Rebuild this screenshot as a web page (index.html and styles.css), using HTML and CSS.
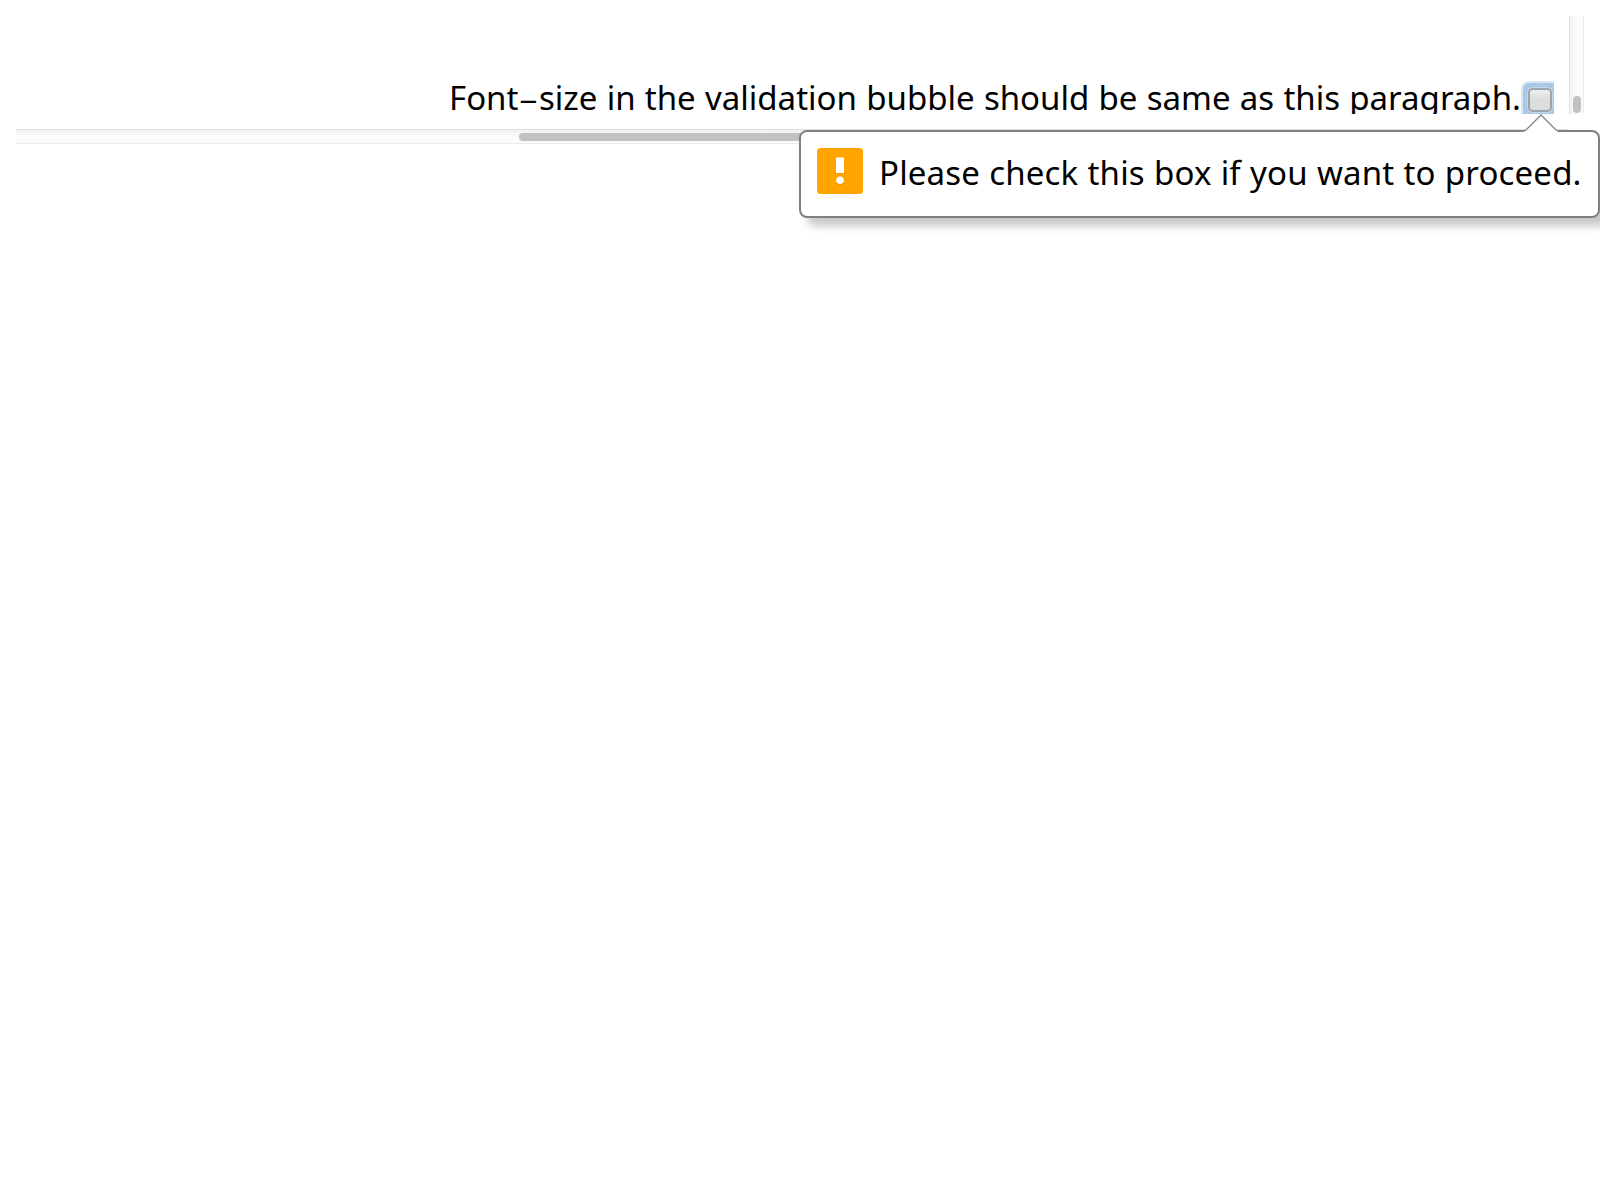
FILE: index.html
```html
<!DOCTYPE html>
<html lang="en">
<head>
<meta charset="utf-8">
<title>Validation bubble</title>
<link rel="stylesheet" href="styles.css">
</head>
<body>
<div class="scroller">
  <div class="viewport">
    <p class="paragraph">Font<span class="hyphen">-</span>size in the validation bubble should be same as this paragraph.</p>
    <span class="focus"><span class="checkbox"></span></span>
  </div>
  <div class="track-v"><div class="thumb-v"></div></div>
  <div class="track-h"><div class="thumb-h"></div></div>
</div>
<div class="bubble">
  <svg class="arrow" width="36" height="19" viewBox="0 0 36 19"><path d="M1 19V17.2L18 1L35 17.2V19Z" fill="#fff"/><path d="M1 17L2.5 16.5L18 1L33.500 16.5L35 17" fill="none" stroke="#808080" stroke-width="1.3"/></svg>
  <svg class="icon" width="46" height="46" viewBox="0 0 46 46"><rect width="46" height="46" rx="3.500" fill="#ffa400"/><path d="M19 10h8v16h-8z" fill="#e08a00" opacity=".5"/><circle cx="23" cy="33.300" r="3.800" fill="#d98200" opacity=".6"/><path d="M19 9.500h8v15.500h-8z" fill="#fff"/><circle cx="23" cy="32.300" r="3.800" fill="#fff"/></svg>
  <span class="message">Please check this box if you want to proceed.</span>
</div>
</body>
</html>
```
FILE: styles.css
```css
body {
  margin: 0;
  padding: 16px;
  height: 1168px;
  overflow: hidden;
  background: #fff;
  color: #000;
  font: 33px/44px "Noto Sans", sans-serif;
}
.scroller {
  display: grid;
  grid-template-columns: 1538px 15px;
  grid-template-rows: 98px 15px;
  column-gap: 15px;
  row-gap: 15px;
}
.viewport {
  display: flex;
  align-items: flex-end;
  justify-content: flex-end;
  overflow: hidden;
}
.paragraph {
  width: 1072px;
  height: 38px;
  margin: 0;
  white-space: nowrap;
  word-spacing: .7px;
}
.hyphen {
  display: inline-block;
  width: 20.5px;
  text-align: center;
  transform: translateY(1px) scale(1.9, .85);
}
.focus {
  box-sizing: border-box;
  width: 33px;
  height: 33px;
  padding: 5px 0 0 5px;
  border: 2px solid #d9e7f5;
  border-width: 2px 0 0 2px;
  border-radius: 8px 0 0 0;
  background: #a9c9e7;
}
.checkbox {
  box-sizing: border-box;
  display: block;
  width: 24px;
  height: 24px;
  border: 2px solid #9da3ab;
  border-radius: 5px;
  background: linear-gradient(#efefef, #dcdcdc 50%, #dedede);
  box-shadow: 0 0 0 1px #c5d8ea;
}
.track-v {
  display: flex;
  align-items: flex-end;
  justify-content: center;
  padding-bottom: 1px;
  background: linear-gradient(90deg, #e2e2e2 0 1px, #f3f3f3 1px, #fcfcfc 8px, #fafafa 14px, #ececec 14px);
}
.thumb-v {
  width: 8px;
  height: 17px;
  border-radius: 4px;
  background: #c1c1c1;
}
.track-h {
  display: flex;
  align-items: center;
  box-sizing: border-box;
  width: 1553px;
  padding-left: 503px;
  background: linear-gradient(#e0e0e0 0 1px, #f1f1f1 1px, #fcfcfc 8px, #fafafa 14px, #ececec 14px);
}
.thumb-h {
  width: 1046px;
  height: 8px;
  border-radius: 4px;
  background: #c1c1c1;
}
.bubble {
  position: absolute;
  left: 799px;
  top: 130px;
  box-sizing: border-box;
  width: 801px;
  height: 88px;
  display: flex;
  align-items: flex-start;
  gap: 16px;
  padding: 16px;
  border: 2px solid #808080;
  border-radius: 8px;
  background: #fff;
  box-shadow: 8px 8px 8px rgba(0, 0, 0, .22);
}
.arrow {
  position: absolute;
  left: 722px;
  top: -18px;
}
.icon {
  flex: none;
}
.message {
  padding-top: 3px;
  white-space: nowrap;
  letter-spacing: .17px;
  word-spacing: .4px;
}
```
